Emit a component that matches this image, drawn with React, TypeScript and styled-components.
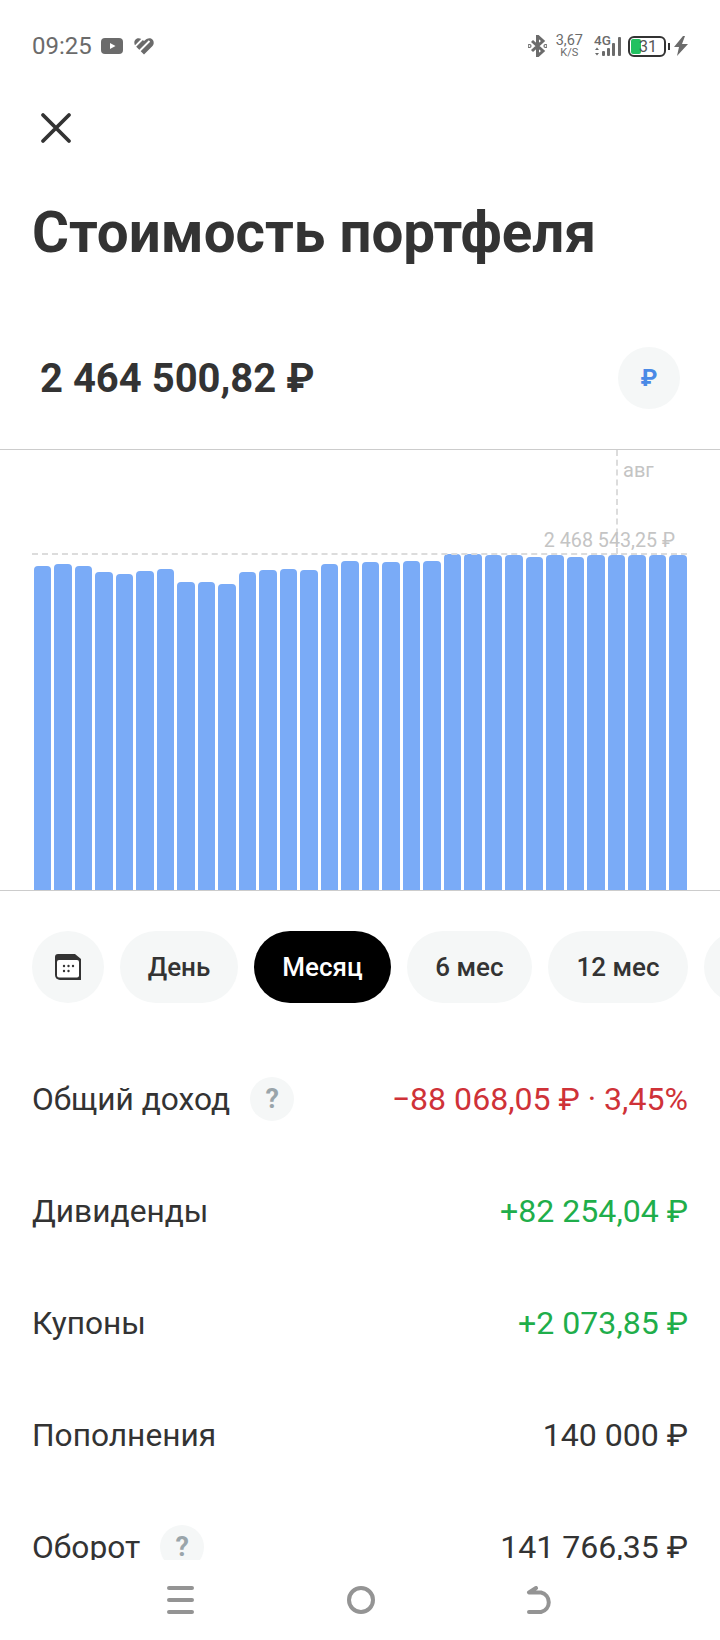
import React from "react";
import styled, { createGlobalStyle } from "styled-components";

const Global = createGlobalStyle`
  html, body { margin: 0; padding: 0; background: #fff; }
  body { font-family: Roboto, "Liberation Sans", sans-serif; color: #333; }
`;

const Screen = styled.div`
  width: 720px;
  height: 1640px;
  display: flex;
  flex-direction: column;
  overflow: hidden;
  background: #fff;
`;

const StatusBar = styled.div`
  height: 92px;
  flex: none;
  box-sizing: border-box;
  padding: 0 32px;
  display: flex;
  align-items: center;
  justify-content: space-between;
  color: #6b6b6b;
`;
const StatusGroup = styled.div`
  display: flex;
  align-items: center;
`;
const Time = styled.span`
  font-size: 24px;
  line-height: 28px;
  margin-right: 9px;
`;
const Speed = styled.div`
  display: flex;
  flex-direction: column;
  align-items: center;
  margin: 0 11px 0 9px;
  font-size: 14.5px;
  line-height: 14px;
  & > small { font-size: 11px; line-height: 10px; }
`;
const Network = styled.div`
  width: 28px;
  position: relative;
  height: 22px;
  margin-right: 6px;
`;
const NetLabel = styled.span`
  position: absolute;
  left: 0;
  top: -1px;
  font-size: 13.5px;
  line-height: 13px;
  font-weight: 500;
`;
const Battery = styled.div`
  width: 38px;
  height: 21px;
  box-sizing: border-box;
  border: 2px solid #333;
  border-radius: 6px;
  position: relative;
  margin-right: 8px;
  padding: 1px;
  display: flex;
  &::after {
    content: "";
    position: absolute;
    right: -6px;
    top: 5px;
    width: 2px;
    height: 7px;
    background: #333;
  }
`;
const BatteryFill = styled.div`
  width: 10px;
  border-radius: 2px;
  background: #22c161;
`;
const BatteryLabel = styled.span`
  position: absolute;
  left: 9px;
  top: -1px;
  font-size: 16px;
  line-height: 19px;
  color: #555;
`;

const CloseRow = styled.div`
  height: 72px;
  flex: none;
  padding-left: 40px;
  display: flex;
  align-items: center;
  color: #333;
`;
const Title = styled.h1`
  margin: 31px 0 0 32px;
  height: 76px;
  flex: none;
  font-size: 56.500px;
  line-height: 76px;
  font-weight: 700;
  color: #333;
`;
const BalanceRow = styled.div`
  flex: none;
  height: 60px;
  margin-top: 77px;
  padding: 0 40px;
  display: flex;
  align-items: center;
  justify-content: space-between;
`;
const Balance = styled.div`
  font-size: 40px;
  font-weight: 700;
  color: #333;
`;
const CurrencyButton = styled.div`
  width: 62px;
  height: 62px;
  border-radius: 50%;
  background: #f5f7f7;
  display: flex;
  align-items: center;
  justify-content: center;
  font-size: 24px;
  font-weight: 700;
  color: #4a8ae6;
`;
const Chart = styled.div`
  flex: none;
  margin-top: 41px;
  height: 442px;
  box-sizing: border-box;
  border-top: 1px solid #ccc;
  border-bottom: 1px solid #ccc;
  padding: 0 33.5px 0 34px;
  position: relative;
  display: flex;
  align-items: flex-end;
  gap: 3px;
`;
const Bar = styled.div<{ $top: number }>`
  flex: 1;
  height: ${(p) => 890 - p.$top}px;
  border-radius: 4px 4px 0 0;
  background: #7aabf7;
`;
const VGuide = styled.div`
  position: absolute;
  left: 616px;
  top: 0;
  height: 104px;
  border-left: 2px dashed #dcdcdc;
`;
const HGuide = styled.div`
  position: absolute;
  left: 32px;
  right: 33px;
  top: 103px;
  border-top: 2px dashed #dcdcdc;
`;
const MonthLabel = styled.span`
  position: absolute;
  left: 623px;
  top: 8px;
  font-size: 20px;
  line-height: 24px;
  color: #c4c4c4;
`;
const MaxLabel = styled.span`
  position: absolute;
  right: 45px;
  top: 79px;
  font-size: 19.700px;
  line-height: 24px;
  color: #c4c4c4;
`;
const Pills = styled.div`
  flex: none;
  margin-top: 40px;
  padding-left: 32px;
  display: flex;
  gap: 16px;
`;
const Pill = styled.div<{ $active?: boolean; $w: number }>`
  flex: none;
  width: ${(p) => p.$w}px;
  height: 72px;
  border-radius: 36px;
  display: flex;
  align-items: center;
  justify-content: center;
  font-size: 26px;
  font-weight: 500;
  background: ${(p) => (p.$active ? "#000" : "#f5f7f7")};
  color: ${(p) => (p.$active ? "#fff" : "#333")};
`;
const Rows = styled.div`
  flex: 1;
  min-height: 0;
  overflow: hidden;
  margin-top: 40px;
  padding: 0 32px 0 32px;
`;
const Row = styled.div`
  height: 112px;
  display: flex;
  align-items: center;
  justify-content: space-between;
  font-size: 31.700px;
`;
const RowLabel = styled.div`
  display: flex;
  align-items: center;
  gap: 20px;
  color: #333;
`;
const Hint = styled.span`
  width: 44px;
  height: 44px;
  border-radius: 50%;
  background: #f5f7f7;
  display: flex;
  align-items: center;
  justify-content: center;
  font-size: 27px;
  font-weight: 700;
  color: #9aa5aa;
`;
const RowValue = styled.div<{ $tone?: "red" | "green" }>`
  font-size: 32.100px;
  color: ${(p) => (p.$tone === "red" ? "#cf3238" : p.$tone === "green" ? "#1fae4b" : "#333")};
`;
const NavBar = styled.div`
  flex: none;
  height: 80px;
  background: #fff;
  display: grid;
  grid-template-columns: 180px 179px 182px;
  justify-content: start;
  padding-left: 167px;
  align-items: center;
  color: #949494;
`;

const tops = [566,564,566,572,574,571,569,582,582,584,572,570,569,570,564,561,562,562,561,561,554,554,555,555,557,555,557,555,555,555,555,555];
const rows: { label: string; hint?: boolean; value: string; tone?: "red" | "green" }[] = [
  { label: "Общий доход", hint: true, value: "−88 068,05 ₽ · 3,45%", tone: "red" },
  { label: "Дивиденды", value: "+82 254,04 ₽", tone: "green" },
  { label: "Купоны", value: "+2 073,85 ₽", tone: "green" },
  { label: "Пополнения", value: "140 000 ₽" },
  { label: "Оборот", hint: true, value: "141 766,35 ₽" },
];

export default function App() {
  return (
    <Screen>
      <Global />
      <StatusBar>
        <StatusGroup>
          <Time>09:25</Time>
          <svg width="22" height="16" viewBox="0 0 22 16"><rect width="22" height="16" rx="4" fill="currentColor" /><path d="M9 5l5.500 3L9 11z" fill="#fff" /></svg>
          <svg width="20" height="18" viewBox="0 0 20 18" style={{ marginLeft: 11 }}>
            <path d="M10 17.500L1.500 9C-.5 6.800 0 2.500 3 1.500 5.500.7 8 2 10 4c2-2 4.500-3.300 7-2.500 3 1 3.500 5.300 1.500 7.500z" fill="currentColor" />
            <path d="M0 10.500L10 .5M4.500 15L15.500 4" stroke="#fff" strokeWidth="1.900" fill="none" />
          </svg>
        </StatusGroup>
        <StatusGroup>
          <svg width="19" height="22" viewBox="0 0 19 22" fill="none" stroke="currentColor" strokeWidth="3">
            <path d="M4 6l11 10-5.500 5V1L15 6 4 16" />
            <circle cx="1.500" cy="11" r=".6" /><circle cx="17.500" cy="11" r=".6" />
          </svg>
          <Speed>3,67<small>K/S</small></Speed>
          <Network>
            <NetLabel>4G</NetLabel>
            <svg width="28" height="22" viewBox="0 0 28 22" fill="currentColor">
              <path d="M1 15l2-2.500L5 15zM1 18l2 2.500L5 18z" />
              <rect x="8" y="16" width="3" height="5" rx="1" /><rect x="13" y="13" width="3" height="8" rx="1" /><rect x="18" y="8" width="3" height="13" rx="1" /><rect x="24" y="2" width="3" height="19" rx="1" />
            </svg>
          </Network>
          <Battery><BatteryFill /><BatteryLabel>31</BatteryLabel></Battery>
          <svg width="14" height="20" viewBox="0 0 14 20" fill="currentColor"><path d="M9 0L0 11h5l-2 9 11-12H8l3-8z" /></svg>
        </StatusGroup>
      </StatusBar>
      <CloseRow>
        <svg width="32" height="32" viewBox="0 0 32 32" fill="none" stroke="currentColor" strokeWidth="3.800" strokeLinecap="round">
          <path d="M3 3l26 26M29 3L3 29" />
        </svg>
      </CloseRow>
      <Title>Стоимость портфеля</Title>
      <BalanceRow>
        <Balance>2 464 500,82 ₽</Balance>
        <CurrencyButton>₽</CurrencyButton>
      </BalanceRow>
      <Chart>
        {tops.map((t, i) => <Bar key={i} $top={t} />)}
        <HGuide />
        <VGuide />
        <MonthLabel>авг</MonthLabel>
        <MaxLabel>2 468 543,25 ₽</MaxLabel>
      </Chart>
      <Pills>
        <Pill $w={72}>
          <svg width="26" height="26" viewBox="0 0 26 26">
            <path d="M0 3a3 3 0 0 1 3-3h17l6 5v21H5a5 5 0 0 1-5-5z" fill="#333" />
            <rect x="2" y="6" width="22" height="17.500" rx="2" fill="#fff" />
            <g fill="#333"><circle cx="9" cy="12" r="1.200" /><circle cx="13.500" cy="12" r="1.200" /><circle cx="18" cy="12" r="1.200" /><circle cx="9" cy="17" r="1.200" /><circle cx="13.500" cy="17" r="1.200" /></g>
          </svg>
        </Pill>
        <Pill $w={118}>День</Pill>
        <Pill $w={137} $active>Месяц</Pill>
        <Pill $w={125}>6 мес</Pill>
        <Pill $w={140}>12 мес</Pill>
        <Pill $w={100} />
      </Pills>
      <Rows>
        {rows.map((r) => (
          <Row key={r.label}>
            <RowLabel>{r.label}{r.hint && <Hint>?</Hint>}</RowLabel>
            <RowValue $tone={r.tone}>{r.value}</RowValue>
          </Row>
        ))}
      </Rows>
      <NavBar>
        <svg width="27" height="28" viewBox="0 0 27 28" fill="none" stroke="currentColor" strokeWidth="4" strokeLinecap="round"><path d="M2 2h23M2 14h23M2 26h23" /></svg>
        <svg width="28" height="28" viewBox="0 0 28 28" fill="none" stroke="currentColor" strokeWidth="4"><circle cx="14" cy="14" r="12" /></svg>
        <svg width="27" height="28" viewBox="0 0 27 28" fill="none" stroke="currentColor" strokeWidth="4" strokeLinecap="round" strokeLinejoin="round"><path d="M10 2L3 6.500h12a10 10 0 0 1 0 19.500H3" /></svg>
      </NavBar>
    </Screen>
  );
}
